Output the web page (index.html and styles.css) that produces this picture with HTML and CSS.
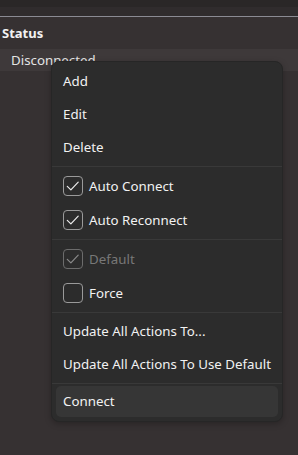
FILE: index.html
```html
<!DOCTYPE html>
<html>
<head>
<meta charset="utf-8">
<link rel="stylesheet" href="styles.css">
</head>
<body>
<div class="page">
  <div class="topbar"></div>
  <div class="toolbar"></div>
  <div class="divider"></div>
  <div class="header">Status</div>
  <div class="row">Disconnected</div>
  <div class="menu">
    <div class="item">Add</div>
    <div class="item">Edit</div>
    <div class="item">Delete</div>
    <div class="sep"></div>
    <div class="item check"><span class="box"><svg viewBox="0 0 20 20"><path d="M4.3 10.3 L7.9 13.9 L15.2 6.2"/></svg></span>Auto Connect</div>
    <div class="item check"><span class="box"><svg viewBox="0 0 20 20"><path d="M4.3 10.3 L7.9 13.9 L15.2 6.2"/></svg></span>Auto Reconnect</div>
    <div class="sep"></div>
    <div class="item check disabled"><span class="box"><svg viewBox="0 0 20 20"><path d="M4.3 10.3 L7.9 13.9 L15.2 6.2"/></svg></span>Default</div>
    <div class="item check"><span class="box"></span>Force</div>
    <div class="sep"></div>
    <div class="item">Update All Actions To...</div>
    <div class="item">Update All Actions To Use Default</div>
    <div class="sep"></div>
    <div class="item hover">Connect</div>
  </div>
</div>
</body>
</html>
```
FILE: styles.css
```css
* { box-sizing: border-box; }
html, body { margin: 0; padding: 0; }
body {
  width: 298px;
  height: 455px;
  background: #363132;
  font-family: "Segoe UI", "Noto Sans", "Open Sans", sans-serif;
  color: #e6e6e6;
  overflow: hidden;
}
.page { position: relative; height: 455px; }
.topbar { height: 7px; background: #2a2727; }
.toolbar { height: 9px; background: #302c2d; }
.divider { height: 1px; background: #8b8b93; }
.header {
  height: 32px;
  display: flex;
  align-items: center;
  padding-left: 2px;
  font-weight: 700;
  font-size: 13px;
  color: #f2f2f2;
}
.row {
  height: 22px;
  background: #3e393a;
  display: flex;
  align-items: center;
  padding-left: 11px;
  font-size: 13.3px;
  color: #e4e4e4;
}
.menu {
  position: absolute;
  left: 51px;
  top: 61px;
  width: 232px;
  padding: 3px 4px 4px 4px;
  background: #2c2c2c;
  border: 1px solid #262626;
  border-radius: 8px;
  box-shadow: 0 2px 6px rgba(0,0,0,0.25);
}
.item {
  height: 33px;
  display: flex;
  align-items: center;
  padding-left: 7px;
  padding-bottom: 1px;
  font-size: 13.3px;
  color: #f2f2f2;
  border-radius: 5px;
}
.item.check { height: 34px; }
.item.hover { background: #363636; height: 31px; }
.sep {
  height: 1px;
  background: #393939;
  margin: 2px -4px 2px -4px;
}
.box {
  width: 20px;
  height: 20px;
  border: 1px solid #9a9a9a;
  border-radius: 4px;
  margin-right: 6px;
  display: flex;
  align-items: center;
  justify-content: center;
}
.box svg { width: 20px; height: 20px; flex: none; }
.box path { fill: none; stroke: #ececec; stroke-width: 1.2; stroke-linecap: round; stroke-linejoin: round; }
.disabled { color: #787878; }
.disabled .box { border-color: #6c6c6c; }
.disabled .box path { stroke: #8a8a8a; }
```
